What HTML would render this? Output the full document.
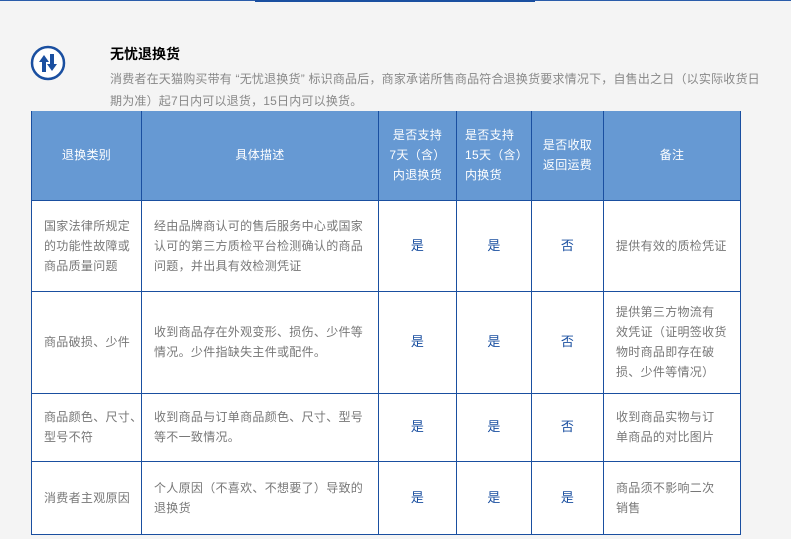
<!DOCTYPE html>
<html><head><meta charset="utf-8"><style>
body{margin:0;width:791px;height:539px;background:#f4f4f4;position:relative;overflow:hidden;font-family:"Liberation Sans","Noto Sans CJK SC",sans-serif;}
.tl{position:absolute;top:0;left:0;width:791px;height:1px;background:#2a5caa;}
.tb{position:absolute;top:0;left:255px;width:280px;height:2px;background:#1a4fa0;}
.h{position:absolute;left:110px;top:44px;font-size:14px;font-weight:bold;color:#000;}
.d{position:absolute;left:110px;top:68px;width:680px;font-size:12px;color:#888;line-height:22px;white-space:nowrap;letter-spacing:0.2px;}
table{position:absolute;left:31px;top:111px;border-collapse:collapse;background:#fff;table-layout:fixed;width:709px;}
td,th{border:1.5px solid #1a4fa0;font-size:12px;padding:0 0 0 12px;line-height:20px;white-space:nowrap;letter-spacing:0.3px;}
th{background:#6699d3;color:#fff;font-weight:normal;text-align:center;border-top:none;padding:0 2px;}
td{color:#777;}
td.c{text-align:center;color:#1a4fa0;font-size:13px;padding:0;}
</style></head><body>
<div class="tl"></div><div class="tb"></div>
<svg style="position:absolute;left:30px;top:45px" width="36" height="36" viewBox="0 0 36 36">
<circle cx="18" cy="18" r="16" fill="#fff" stroke="#1a4fa0" stroke-width="2.5"/>
<path d="M9 17 L14 10 L19 17 L16 17 L16 27 L12 27 L12 17 Z" fill="#1a4fa0"/>
<path d="M17 19 L20 19 L20 9 L24 9 L24 19 L27 19 L22 26 Z" fill="#1a4fa0"/>
</svg>
<div class="h">无忧退换货</div>
<div class="d">消费者在天猫购买带有 “无忧退换货” 标识商品后，商家承诺所售商品符合退换货要求情况下，自售出之日（以实际收货日<br>期为准）起7日内可以退货，15日内可以换货。</div>
<table>
<colgroup><col style="width:110px"><col style="width:237px"><col style="width:78px"><col style="width:75px"><col style="width:72px"><col style="width:137px"></colgroup>
<tr style="height:89px"><th>退换类别</th><th>具体描述</th><th>是否支持<br>7天（含）<br>内退换货</th><th style="text-align:left;padding-left:8px">是否支持<br>15天（含）<br>内换货</th><th>是否收取<br>返回运费</th><th>备注</th></tr>
<tr style="height:91px"><td>国家法律所规定<br>的功能性故障或<br>商品质量问题</td><td>经由品牌商认可的售后服务中心或国家<br>认可的第三方质检平台检测确认的商品<br>问题，并出具有效检测凭证</td><td class="c">是</td><td class="c">是</td><td class="c">否</td><td>提供有效的质检凭证</td></tr>
<tr style="height:102px"><td>商品破损、少件</td><td>收到商品存在外观变形、损伤、少件等<br>情况。少件指缺失主件或配件。</td><td class="c">是</td><td class="c">是</td><td class="c">否</td><td>提供第三方物流有<br>效凭证（证明签收货<br>物时商品即存在破<br>损、少件等情况）</td></tr>
<tr style="height:68px"><td>商品颜色、尺寸、<br>型号不符</td><td>收到商品与订单商品颜色、尺寸、型号<br>等不一致情况。</td><td class="c">是</td><td class="c">是</td><td class="c">否</td><td>收到商品实物与订<br>单商品的对比图片</td></tr>
<tr style="height:73px"><td>消费者主观原因</td><td>个人原因（不喜欢、不想要了）导致的<br>退换货</td><td class="c">是</td><td class="c">是</td><td class="c">是</td><td>商品须不影响二次<br>销售</td></tr>
</table>
</body></html>
